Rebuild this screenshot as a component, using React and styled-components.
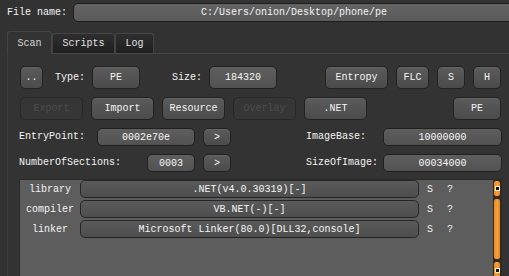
import React from "react";
import styled, { createGlobalStyle, css } from "styled-components";

const Global = createGlobalStyle`
  html, body { margin: 0; padding: 0; background: #323232; }
  body { font-family: "Liberation Mono", "DejaVu Sans Mono", monospace; font-size: 10px; color: #f2f2f2; }
`;

const Window = styled.div`
  width: 509px;
  height: 276px;
  overflow: hidden;
  background: #323232;
  box-sizing: border-box;
`;

const TopBar = styled.div`
  display: flex;
  align-items: center;
  padding: 3px 0 0 7px;
  height: 19px;
`;

const Label = styled.span`
  display: inline-block;
  width: ${(p) => p.$w || "auto"};
  margin-left: ${(p) => p.$ml || 0}px;
  flex: ${(p) => (p.$grow ? 1 : "none")};
  white-space: pre;
  color: #f4f4f4;
  line-height: 12px;
`;

const PathField = styled.div`
  flex: 1;
  height: 19px;
  margin-right: -6px;
  box-sizing: border-box;
  border: 1px solid #1d1d1d;
  border-radius: 5px;
  background: linear-gradient(#636363, #5a5a5a);
  display: flex;
  align-items: center;
  justify-content: center;
  color: #f4f4f4;
`;

const Tabs = styled.div`
  display: flex;
  align-items: flex-end;
  margin: 9px 0 0 7px;
  height: 22px;
`;

const Tab = styled.div`
  box-sizing: border-box;
  width: ${(p) => p.$w}px;
  height: ${(p) => (p.$active ? 23 : 20)}px;
  margin-bottom: ${(p) => (p.$active ? -1 : 0)}px;
  display: flex;
  align-items: center;
  justify-content: center;
  border: 1px solid #444;
  border-bottom: none;
  border-radius: 3px 3px 0 0;
  color: ${(p) => (p.$active ? "#d8d8d8" : "#e2e2e2")};
  background: ${(p) =>
    p.$active ? "#333333" : "linear-gradient(#2e2e2e, #1f1f1f)"};
  position: relative;
  z-index: ${(p) => (p.$active ? 1 : 0)};
`;

const Pane = styled.div`
  margin-left: 7px;
  border-top: 1px solid #474747;
  border-left: 1px solid #3d3d3d;
  padding: 12px 0 0 12px;
  height: 230px;
  box-sizing: border-box;
  background: #333333;
`;

const Row = styled.div`
  display: flex;
  align-items: center;
  height: ${(p) => p.$h || 23}px;
  margin-top: ${(p) => p.$mt || 0}px;
`;

const boxBase = css`
  box-sizing: border-box;
  flex: none;
  width: ${(p) => p.$w}px;
  height: 100%;
  margin-left: ${(p) => p.$ml || 0}px;
  display: flex;
  align-items: center;
  justify-content: center;
  border-radius: 5px;
  white-space: pre;
`;

const Button = styled.div`
  ${boxBase}
  border: 1px solid #222;
  background: linear-gradient(#5b5b5b, #4b4b4b);
  color: #f6f6f6;
  box-shadow: inset 0 1px 0 rgba(255, 255, 255, 0.06);
  ${(p) =>
    p.$disabled &&
    css`
      background: #363636;
      border-color: #272727;
      color: #4c4c4c;
      box-shadow: none;
    `}
`;

const Field = styled.div`
  ${boxBase}
  border: 1px solid #202020;
  background: linear-gradient(#5e5e5e, #525252);
  color: #f6f6f6;
`;

const LeftGroup = styled.div`
  display: flex;
  align-items: center;
  width: 176px;
  height: 100%;
  margin-left: -1px;
`;

const List = styled.div`
  margin: 7px 0 0 -1px;
  width: 483px;
  height: 100px;
  box-sizing: border-box;
  border: 1px solid #2a2a2a;
  border-bottom: none;
  background: #5d5d5d;
  display: flex;
`;

const ListRows = styled.div`
  flex: 1;
  display: flex;
  flex-direction: column;
  gap: 2px;
  padding-top: 0;
`;

const ListRow = styled.div`
  display: flex;
  align-items: center;
  height: 18px;
`;

const RowName = styled.span`
  width: 60px;
  text-align: center;
  color: #f4f4f4;
`;

const RowValue = styled.div`
  box-sizing: border-box;
  width: 339px;
  height: 100%;
  border: 1px solid #262626;
  border-radius: 5px;
  background: linear-gradient(#5a5a5a, #4e4e4e);
  display: flex;
  align-items: center;
  justify-content: center;
  white-space: pre;
  color: #f6f6f6;
`;

const Flag = styled.span`
  margin-left: ${(p) => p.$ml}px;
  color: #f0f0f0;
`;

const ScrollBar = styled.div`
  width: 8px;
  margin-right: 0;
  display: flex;
  flex-direction: column;
  gap: 1px;
  background: #2b2b2b;
  padding-top: 0;
`;

const ScrollPart = styled.div`
  box-sizing: border-box;
  height: ${(p) => p.$h}px;
  border: 1px solid #3a2a14;
  border-radius: 3px;
  background: linear-gradient(90deg, #e58a26, #f6a040 50%, #e0841f);
  display: flex;
  align-items: center;
  justify-content: center;
`;

const Dot = styled.div`
  width: 3px;
  height: 3px;
  background: #111;
  border: 1px solid #fff0d0;
`;

export default function App() {
  const rows = [
    ["library", ".NET(v4.0.30319)[-]"],
    ["compiler", "VB.NET(-)[-]"],
    ["linker", "Microsoft Linker(80.0)[DLL32,console]"],
  ];
  return (
    <Window>
      <Global />
      <TopBar>
        <Label $w="66px">File name:</Label>
        <PathField>C:/Users/onion/Desktop/phone/pe</PathField>
      </TopBar>
      <Tabs>
        <Tab $w={45} $active>Scan</Tab>
        <Tab $w={63}>Scripts</Tab>
        <Tab $w={39}>Log</Tab>
      </Tabs>
      <Pane>
        <Row>
          <Button $w={23}>..</Button>
          <Label $ml={12} $w="30px">Type:</Label>
          <Button $w={48} $ml={7}>PE</Button>
          <Label $ml={32} $w="30px">Size:</Label>
          <Field $w={68} $ml={7}>184320</Field>
          <Button $w={63} $ml={48}>Entropy</Button>
          <Button $w={33} $ml={8}>FLC</Button>
          <Button $w={28} $ml={8}>S</Button>
          <Button $w={28} $ml={8}>H</Button>
        </Row>
        <Row $mt={8}>
          <Button $w={63} $disabled>Export</Button>
          <Button $w={63} $ml={8}>Import</Button>
          <Button $w={63} $ml={8}>Resource</Button>
          <Button $w={63} $ml={8} $disabled>Overlay</Button>
          <Button $w={63} $ml={8}>.NET</Button>
          <Button $w={48} $ml={86}>PE</Button>
        </Row>
        <Row $mt={8} $h={18}>
          <LeftGroup>
            <Label $grow>EntryPoint:</Label>
            <Field $w={98}>0002e70e</Field>
          </LeftGroup>
          <Button $w={28} $ml={8}>&gt;</Button>
          <Label $ml={75} $w="77px">ImageBase:</Label>
          <Field $w={119}>10000000</Field>
        </Row>
        <Row $mt={8} $h={18}>
          <LeftGroup>
            <Label $grow>NumberOfSections:</Label>
            <Field $w={48}>0003</Field>
          </LeftGroup>
          <Button $w={28} $ml={8}>&gt;</Button>
          <Label $ml={75} $w="77px">SizeOfImage:</Label>
          <Field $w={119}>00034000</Field>
        </Row>
        <List>
          <ListRows>
            {rows.map(([name, value]) => (
              <ListRow key={name}>
                <RowName>{name}</RowName>
                <RowValue>{value}</RowValue>
                <Flag $ml={8}>S</Flag>
                <Flag $ml={14}>?</Flag>
              </ListRow>
            ))}
          </ListRows>
          <ScrollBar>
            <ScrollPart $h={17}><Dot /></ScrollPart>
            <ScrollPart $h={62} />
            <ScrollPart $h={18}><Dot /></ScrollPart>
          </ScrollBar>
        </List>
      </Pane>
    </Window>
  );
}
